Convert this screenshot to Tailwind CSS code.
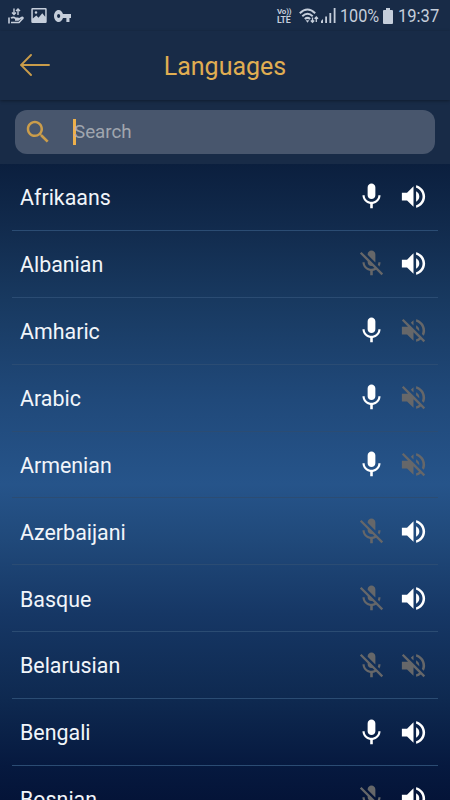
<!DOCTYPE html>
<html lang="en">
<head>
<meta charset="utf-8">
<title>Languages</title>
<script src="https://cdn.jsdelivr.net/npm/@tailwindcss/browser@4"></script>
</head>
<body class="m-0 overflow-hidden">
<svg class="hidden">
  <symbol id="mic" viewBox="0 0 24 24"><path d="M12 14c1.66 0 2.99-1.34 2.99-3L15 5c0-1.66-1.34-3-3-3S9 3.34 9 5v6c0 1.66 1.34 3 3 3zm5.3-3c0 3-2.54 5.1-5.3 5.1S6.7 14 6.7 11H5c0 3.41 2.72 6.23 6 6.72V21h2v-3.28c3.28-.48 6-3.3 6-6.72h-1.7z"/></symbol>
  <symbol id="mic-off" viewBox="0 0 24 24"><path d="M19 11h-1.7c0 .74-.16 1.43-.43 2.05l1.23 1.23c.56-.98.9-2.09.9-3.28zm-4.02.17c0-.06.02-.11.02-.17V5c0-1.66-1.34-3-3-3S9 3.34 9 5v.18l5.98 5.99zM4.27 3L3 4.27l6.01 6.01V11c0 1.66 1.33 3 2.99 3 .22 0 .44-.03.65-.08l1.66 1.66c-.71.33-1.5.52-2.31.52-2.76 0-5.3-2.1-5.3-5.1H5c0 3.41 2.72 6.23 6 6.72V21h2v-3.28c.91-.13 1.77-.45 2.54-.9L19.73 21 21 19.73 4.27 3z"/></symbol>
  <symbol id="vol" viewBox="0 0 24 24"><path d="M3 9v6h4l5 5V4L7 9H3zm13.5 3c0-1.77-1.02-3.29-2.5-4.03v8.05c1.48-.73 2.5-2.25 2.5-4.02zM14 3.23v2.06c2.89.86 5 3.54 5 6.71s-2.11 5.85-5 6.71v2.06c4.01-.91 7-4.49 7-8.77s-2.99-7.86-7-8.77z"/></symbol>
  <symbol id="vol-off" viewBox="0 0 24 24"><path d="M16.5 12c0-1.77-1.02-3.29-2.5-4.03v2.21l2.45 2.45c.03-.2.05-.41.05-.63zm2.5 0c0 .94-.2 1.82-.54 2.64l1.51 1.51C20.63 14.91 21 13.5 21 12c0-4.28-2.99-7.86-7-8.77v2.06c2.89.86 5 3.54 5 6.71zM4.27 3L3 4.27 7.73 9H3v6h4l5 5v-6.73l4.25 4.25c-.67.52-1.42.93-2.25 1.18v2.06c1.38-.31 2.63-.95 3.69-1.81L19.73 21 21 19.73l-9-9L4.27 3zM12 4L9.91 6.09 12 8.18V4z"/></symbol>
</svg>
<div class="flex h-[800px] w-[450px] flex-col overflow-hidden bg-[#182b47] font-[Roboto,sans-serif]">
  <div class="flex h-[31px] shrink-0 items-center justify-between pr-[10px] pl-[8px] text-[#c5cedb]">
    <div class="flex items-center gap-[7px]">
      <svg class="h-4 w-4" viewBox="0 0 16 16" fill="none" stroke="currentColor" stroke-width="1.6"><path d="M6 0.500v6M4 4.500l2 2 2-2M10 7V1M8 3l2-2 2 2" stroke-width="1.400"/><path d="M1 9.500v6M3 10.200c2-1.500 3.500-.8 4.500.2h2.500c1 0 1 1.600 0 1.600H7M10.500 11.500l3.200-2c1.200-.5 1.700.5.8 1.300L11 14.500H3"/></svg>
      <svg class="h-[15px] w-4" viewBox="0 0 16 15" fill="currentColor"><path fill-rule="evenodd" d="M1.500 0h13q1.200 0 1.200 1.200v12.600q0 1.200-1.200 1.200h-13Q.3 15 .3 13.800V1.200Q.3 0 1.500 0zM1.800 1.500v9l3.500-3 2.200 2.200 3.800-4.500 2.900 3.500V1.500zM5 3.200a1.300 1.300 0 1 1 0 2.600 1.300 1.300 0 0 1 0-2.600z"/></svg>
      <svg class="h-[12px] w-[17px]" viewBox="1 6 22 12" preserveAspectRatio="none" fill="currentColor"><path d="M12.650 10C11.830 7.670 9.610 6 7 6c-3.310 0-6 2.690-6 6s2.690 6 6 6c2.610 0 4.830-1.670 5.650-4H17v4h4v-4h2v-4H12.650zM7 14c-1.100 0-2-.9-2-2s.9-2 2-2 2 .9 2 2-.9 2-2 2z"/></svg>
    </div>
    <div class="flex items-center">
      <div class="mr-[7px] flex w-[15px] flex-col">
        <span class="h-[8px] text-[8px] leading-[8px] font-bold tracking-[-0.2px] whitespace-nowrap">Vo))</span>
        <span class="h-[8px] text-[8.800px] leading-[9px] font-bold tracking-[-0.2px] whitespace-nowrap">LTE</span>
      </div>
      <svg class="mr-[2px] h-4 w-5" viewBox="0 0 20 16" fill="none" stroke="currentColor" stroke-width="2"><path d="M.8 5.200Q8.500-2.200 16.200 5.200M3.300 8.200Q8.500 3.400 13.700 8.200M5.800 11Q8.500 8.800 11.200 11"/><path d="M6.700 12.300h3.600l-1.800 2.500z" fill="currentColor" stroke="none"/><path d="M13.500 9.500v5M11.800 12.500l1.700 1.800 1.700-1.800M17.300 14V9M15.600 10.700l1.700-1.800 1.700 1.800" stroke-width="1.300"/></svg>
      <svg class="mr-[4px] h-[15px] w-[15px]" viewBox="0 0 15 15" fill="currentColor"><path d="M0 15v-2l2-2v4zM4.200 8.500h1.800V15H4.200zM8.400 5h1.800v10H8.400zM12.700 0h1.800v15h-1.800z"/></svg>
      <span class="w-[43px] text-[18px] leading-5"><span class="inline-block origin-left scale-x-[0.9]">100%</span></span>
      <svg class="mr-[5px] h-[16px] w-[10px]" viewBox="0 0 10 16" fill="currentColor"><path d="M3 0h4v2h2q1 0 1 1v12q0 1-1 1H1q-1 0-1-1V3q0-1 1-1h2z"/></svg>
      <span class="w-[42px] text-[18px] leading-5"><span class="inline-block origin-left scale-x-[0.92]">19:37</span></span>
    </div>
  </div>
  <header class="grid h-[69px] shrink-0 grid-cols-[1fr_auto_1fr] items-center shadow-[0_1px_3px_rgba(0,0,0,0.35)]">
    <svg class="mb-[1px] ml-[20px] h-[22px] w-[31px]" viewBox="0 0 31 22" fill="none" stroke="#c99c4a" stroke-width="1.900" stroke-linecap="round"><path d="M29 11H1M11 1L1 11l10 10"/></svg>
    <h1 class="pt-[2px] text-[25px] leading-8 text-[#e0ae52]">Languages</h1>
    <span></span>
  </header>
  <div class="h-[64px] shrink-0 px-[15px] pt-[10px]">
    <div class="flex h-[44px] items-center rounded-[12px] bg-[#48566d] pl-[8px]">
      <svg class="h-[30px] w-[30px]" viewBox="0 0 24 24" fill="#cb9d4b"><path d="M15.500 14h-.79l-.28-.27C15.410 12.590 16 11.110 16 9.500 16 5.910 13.090 3 9.500 3S3 5.910 3 9.500 5.910 16 9.500 16c1.610 0 3.090-.59 4.230-1.570l.27.28v.79l5 4.990L20.490 19l-4.990-5zm-6 0C7.010 14 5 11.990 5 9.500S7.010 5 9.500 5 14 7.010 14 9.500 11.990 14 9.500 14z"/></svg>
      <span class="ml-[20px] h-[26px] w-[3px] bg-[#eeb04b]"></span>
      <span class="-ml-[2px] pt-px text-[18.800px] text-[#a0a6af]">Search</span>
    </div>
  </div>
  <main id="list" class="h-[636px] shrink-0 overflow-hidden bg-[linear-gradient(180deg,#0b1f3e_0px,#112a4c_60px,#183960_136px,#20497a_236px,#26548a_320px,#20497a_376px,#163765_450px,#0e2950_536px,#06193f_602px,#041438_636px)]"></main>
</div>
<script>
const rows = [['Afrikaans',1,1],['Albanian',0,1],['Amharic',1,0],['Arabic',1,0],['Armenian',1,0],['Azerbaijani',0,1],['Basque',0,1],['Belarusian',0,0],['Bengali',1,1],['Bosnian',0,1]];
const icon = (id, on) => `<svg class="h-[31px] w-[31px] ${on ? 'fill-white' : 'fill-[#666769]'}"><use href="#${id}${on ? '' : '-off'}"/></svg>`;
document.getElementById('list').innerHTML = rows.map(([name, mic, vol]) => `
  <div class="mx-[12px] flex h-[66.900px] items-center border-b border-[#2b4c73] pr-[9px] pl-[8px]">
    <span class="flex-1 pt-[2.600px] text-[21.400px] leading-[30px] text-[#f1f5fa]">${name}</span>
    <div class="flex gap-[11.500px]">${icon('mic', mic)}${icon('vol', vol)}</div>
  </div>`).join('');
</script>
</body>
</html>
